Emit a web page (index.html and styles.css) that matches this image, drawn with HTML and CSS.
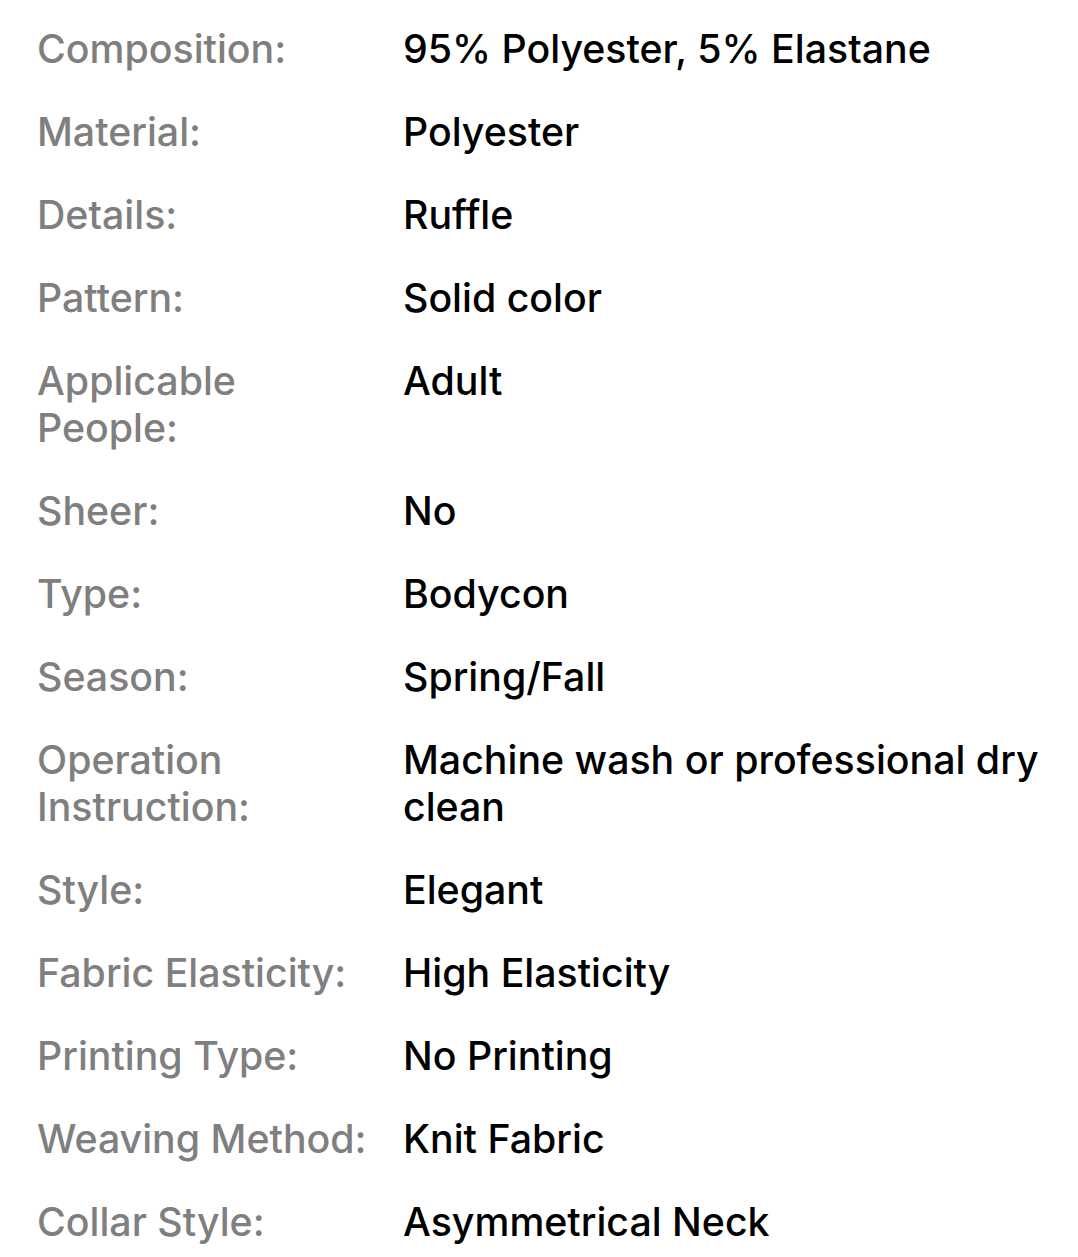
FILE: index.html
```html
<!DOCTYPE html>
<html>
<head>
<meta charset="utf-8">
<link rel="stylesheet" href="styles.css">
</head>
<body>
<dl class="specs">
  <div class="row"><dt>Composition:</dt><dd>95% Polyester, 5% Elastane</dd></div>
  <div class="row"><dt>Material:</dt><dd>Polyester</dd></div>
  <div class="row"><dt>Details:</dt><dd>Ruffle</dd></div>
  <div class="row"><dt>Pattern:</dt><dd>Solid color</dd></div>
  <div class="row"><dt>Applicable People:</dt><dd>Adult</dd></div>
  <div class="row"><dt>Sheer:</dt><dd>No</dd></div>
  <div class="row"><dt>Type:</dt><dd>Bodycon</dd></div>
  <div class="row"><dt>Season:</dt><dd>Spring/Fall</dd></div>
  <div class="row"><dt>Operation Instruction:</dt><dd>Machine wash or professional dry clean</dd></div>
  <div class="row"><dt>Style:</dt><dd>Elegant</dd></div>
  <div class="row"><dt>Fabric Elasticity:</dt><dd>High Elasticity</dd></div>
  <div class="row"><dt>Printing Type:</dt><dd>No Printing</dd></div>
  <div class="row"><dt>Weaving Method:</dt><dd>Knit Fabric</dd></div>
  <div class="row"><dt>Collar Style:</dt><dd>Asymmetrical Neck</dd></div>
</dl>
</body>
</html>
```
FILE: styles.css
```css
html, body {
  margin: 0;
  padding: 0;
  background: #ffffff;
}
body {
  font-family: Inter, "Noto Sans", "Liberation Sans", sans-serif;
  font-weight: 500;
  font-size: 39.3px;
  line-height: 47px;
}
.specs {
  margin: 0;
  padding: 25px 36px 0 37px;
  display: flex;
  flex-direction: column;
  gap: 36px;
}
.row {
  display: grid;
  grid-template-columns: 366px 1fr;
}
dt {
  color: #7f7f7f;
  margin: 0;
  padding-right: 20px;
}
dd {
  color: #000000;
  margin: 0;
}
```
